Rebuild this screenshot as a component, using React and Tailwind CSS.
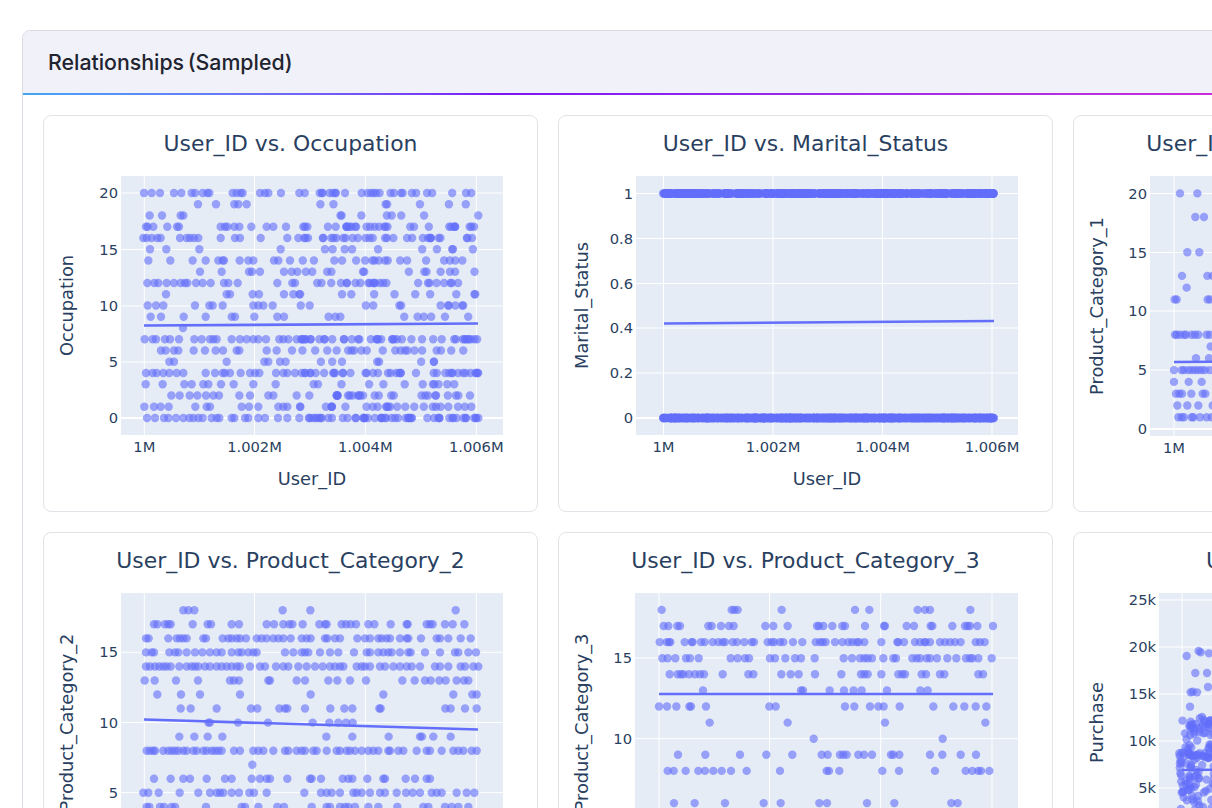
import { useMemo } from 'react';

const DOT = '#636efa';

// small seeded generator so the scatter stays the same on every render
function seeded(seed) {
  let s = seed;
  return () => {
    s = (s * 1664525 + 1013904223) % 4294967296;
    return s / 4294967296;
  };
}

function scatterRows(counts, seed, left, right, yOf) {
  const rand = seeded(seed);
  const dots = [];
  Object.entries(counts).forEach(([value, count]) => {
    for (let i = 0; i < count; i += 1) {
      dots.push([left + rand() * (right - left), yOf(Number(value))]);
    }
  });
  return dots;
}

function listedRows(rows, toX, yOf) {
  const dots = [];
  Object.entries(rows).forEach(([value, xs]) => {
    xs.forEach((x) => dots.push([toX(x), yOf(Number(value))]));
  });
  return dots;
}

const occupationRows = {
  20: [282, 305, 330, 372, 394, 425, 435, 458, 472, 478, 548, 560, 572, 578, 630, 645, 655, 693, 748],
  19: [444, 498, 553, 565, 590],
  18: [299, 336, 392, 400],
  17: [288, 293, 310, 352, 381, 387, 512, 525, 532, 553, 568, 604, 650, 670, 708],
  16: [280, 290, 305, 322, 332, 390, 410, 420, 432, 445, 512, 555, 570, 632, 712, 745],
  15: [300, 349, 448, 692],
  14: [295, 361, 428, 467, 505, 518, 522, 569, 595, 610, 672, 685, 720],
  13: [450, 515, 597, 606, 630, 702, 725, 742],
  12: [292, 313, 325, 350, 372, 392, 405, 412, 438, 458, 482, 522, 535, 563, 682, 727, 735],
  11: [348, 530, 540, 608, 627, 702, 730, 748],
  10: [293, 318, 340, 435, 478, 488, 518, 610, 625, 640, 668],
  9: [302, 333, 401, 467, 545, 555, 613, 682, 702],
  8: [399],
  7: [284, 308, 318, 345, 360, 387, 433, 455, 480, 490, 500, 545, 570, 590, 610, 625, 648, 688, 700, 715, 740],
  6: [333, 347, 372, 385, 431, 465, 497, 519, 560, 568, 650, 680, 726],
  5: [358, 372, 530, 643, 655, 690, 707],
  4: [288, 308, 320, 340, 358, 380, 400, 467, 495, 518, 525, 540, 572, 600, 615, 628, 678, 700, 712, 735],
  3: [287, 338, 403, 425, 460, 475, 513, 551, 610, 677],
  2: [364, 389, 419, 442, 468, 490, 507, 568, 600, 655, 670, 740],
  1: [283, 312, 332, 356, 436, 470, 480, 575, 597, 625, 685, 700, 712, 750],
  0: [291, 315, 342, 355, 378, 400, 418, 430, 445, 458, 485, 500, 508, 545, 553, 585, 595, 625, 645, 684, 712, 748],
};

// right part of the occupation chart, from x = 300 on
const occupationCounts = {
  20: 26, 19: 7, 18: 8, 17: 30, 16: 30, 15: 10, 14: 18, 13: 13, 12: 24, 11: 10, 10: 12,
  9: 9, 7: 40, 6: 20, 5: 8, 4: 38, 3: 12, 2: 26, 1: 24, 0: 50,
};

const category2Rows = {
  18: [430, 445, 463, 728, 811, 1247],
  17: [342, 352, 375, 385, 392, 458, 503, 513, 575, 597, 680, 702, 730, 748, 757, 788, 838, 855, 860, 905, 918, 932, 948, 985, 1003, 1052, 1100, 1103, 1160, 1170, 1178, 1215, 1238, 1273],
  16: [318, 326, 385, 410, 420, 430, 440, 490, 498, 548, 565, 575, 590, 600, 618, 650, 665, 680, 700, 715, 730, 752, 785, 800, 812, 855, 862, 885, 900, 952, 975, 990, 1015, 1025, 1040, 1050, 1080, 1100, 1105, 1143, 1190, 1200, 1225, 1262, 1292],
  15: [318, 335, 342, 388, 405, 415, 440, 465, 487, 510, 530, 545, 575, 595, 605, 625, 640, 650, 735, 760, 785, 795, 805, 840, 870, 895, 942, 980, 990, 1015, 1030, 1045, 1055, 1080, 1105, 1112, 1155, 1200, 1245, 1255, 1285, 1308],
  14: [318, 330, 345, 358, 370, 380, 392, 418, 440, 455, 465, 475, 495, 510, 530, 545, 560, 575, 590, 600, 630, 660, 675, 708, 730, 745, 775, 800, 825, 848, 870, 885, 900, 910, 950, 965, 975, 990, 1020, 1035, 1060, 1080, 1100, 1115, 1140, 1185, 1200, 1225, 1262, 1275, 1300, 1315],
  13: [314, 344, 408, 474, 570, 582, 597, 685, 690, 770, 795, 865, 892, 930, 978, 1087, 1124, 1155, 1172, 1198, 1217, 1250, 1272, 1285],
  12: [352, 423, 480, 600, 812, 1030, 1240, 1297, 1310],
  11: [422, 452, 530, 633, 652, 718, 735, 742, 795, 871, 913, 937, 1018, 1022, 1216, 1232, 1275, 1310],
  10: [505, 510, 594, 684, 818, 868, 895, 918, 938],
  9: [418, 463, 503, 547, 859, 937, 1046, 1140, 1146, 1180, 1232],
  8: [320, 330, 340, 345, 370, 385, 395, 405, 415, 430, 440, 460, 470, 490, 500, 515, 525, 535, 545, 582, 600, 640, 655, 670, 700, 735, 745, 770, 785, 795, 820, 830, 860, 890, 900, 920, 930, 945, 965, 985, 1000, 1015, 1045, 1050, 1075, 1090, 1130, 1160, 1170, 1205, 1240, 1255, 1270, 1295, 1310],
  7: [637],
  6: [342, 392, 430, 450, 500, 555, 575, 635, 660, 680, 690, 742, 810, 815, 843, 908, 925, 937, 982, 1030, 1035, 1097, 1125, 1160, 1170],
  5: [310, 325, 356, 419, 475, 510, 530, 540, 550, 575, 597, 628, 642, 680, 793, 843, 860, 875, 900, 940, 950, 965, 990, 1020, 1035, 1070, 1098, 1118, 1140, 1175, 1190, 1205, 1250, 1280, 1303],
  4: [320, 328, 360, 372, 395, 405, 498, 605, 615, 655, 712, 732, 815, 860, 870, 900, 915, 925, 945, 985, 1015, 1072, 1150, 1165, 1215, 1235, 1255, 1285],
};

const category3Rows = {
  18: [320, 530, 538, 548, 680, 900, 943, 1088, 1110, 1125, 1246],
  17: [326, 340, 367, 375, 460, 470, 498, 522, 536, 631, 655, 698, 786, 792, 805, 832, 862, 870, 930, 987, 990, 1055, 1077, 1127, 1132, 1192, 1230, 1238, 1245, 1267, 1314],
  16: [314, 335, 342, 346, 389, 410, 413, 438, 449, 473, 490, 503, 510, 533, 546, 568, 590, 597, 638, 650, 658, 675, 685, 714, 742, 782, 795, 803, 812, 840, 862, 880, 892, 905, 912, 928, 979, 1027, 1030, 1047, 1080, 1095, 1108, 1112, 1125, 1155, 1170, 1185, 1200, 1217, 1262, 1275, 1289],
  15: [322, 338, 361, 393, 405, 431, 527, 548, 570, 582, 645, 660, 691, 720, 738, 779, 866, 891, 915, 928, 938, 951, 985, 1015, 1023, 1072, 1085, 1095, 1115, 1125, 1146, 1177, 1204, 1233, 1245, 1252, 1270, 1310],
  14: [344, 368, 378, 385, 402, 420, 435, 447, 503, 580, 595, 679, 707, 731, 780, 859, 918, 928, 938, 979, 1030, 1042, 1050, 1100, 1113, 1155, 1168, 1270, 1284],
  13: [444, 738, 744, 824, 867, 896, 920, 996, 1096, 1118],
  12: [312, 336, 364, 403, 408, 453, 643, 662, 870, 898, 945, 970, 986, 1034, 1135, 1195, 1228, 1262, 1294],
  11: [464, 698, 990, 1291],
  10: [776, 1163],
  9: [369, 451, 555, 634, 712, 800, 818, 855, 865, 875, 910, 927, 951, 1008, 1015, 1033, 1125, 1162, 1217, 1263],
  8: [338, 356, 392, 430, 450, 475, 500, 528, 575, 675, 815, 822, 853, 982, 1032, 1140, 1232, 1252, 1270, 1278, 1303],
  6: [357, 419, 510, 626, 677, 793, 816, 936, 1018, 1189, 1208],
};

const category1Rows = {
  20: [360, 412],
  18: [406, 432],
  15: [382, 418],
  13: [366, 442, 458],
  12: [380],
  11: [344, 350, 443, 450],
  8: [345, 350, 360, 372, 378, 395, 405, 415, 440, 450],
  7: [452],
  6: [408, 447],
  5: [342, 365, 372, 385, 395, 405, 415, 425, 435, 450],
  4: [342, 386, 425],
  3: [348, 358, 366, 394, 428, 436],
  2: [352, 382, 415, 458],
  1: [355, 365, 372, 395, 400, 420, 440, 455],
};

const purchaseTop = [
  [380, 408], [416, 393], [422, 397], [447, 400], [406, 459], [441, 459], [444, 501], [392, 517],
  [398, 515], [411, 517], [390, 560], [432, 600], [392, 605], [388, 617], [398, 612], [395, 625],
  [424, 620], [445, 612], [375, 640], [418, 636], [452, 645],
];

function purchaseDots() {
  const rand = seeded(41);
  const dots = purchaseTop.map(([x, y]) => [1060 + x / 3, 520 + y / 3]);
  for (let i = 0; i < 22; i += 1) {
    dots.push([1182 + rand() * 32, 735 + rand() * 18 - 18]);
  }
  for (let i = 0; i < 80; i += 1) {
    dots.push([1179 + rand() * 36, 738 + rand() * 72]);
  }
  for (let i = 0; i < 16; i += 1) {
    dots.push([1182 + rand() * 32, 752 + rand() * 6]);
  }
  return dots;
}

const yLinear = (zero, perUnit) => (value) => zero - value * perUnit;

function occupationDots() {
  const yOf = yLinear(418, 11.25);
  return [
    ...listedRows(occupationRows, (x) => 50 + x / 3, yOf),
    ...scatterRows(occupationCounts, 7, 300, 479, yOf),
  ];
}

const charts = [
  {
    title: 'User_ID vs. Occupation',
    yLabel: 'Occupation',
    card: [43, 115],
    plot: [121, 176, 503, 435],
    xTicks: [144.3, 254.5, 365.3, 476.3],
    yTicks: [['0', 418], ['5', 362], ['10', 306], ['15', 249.5], ['20', 193]],
    zero: 418,
    line: [144, 325.5, 478, 323.5],
    dots: occupationDots,
  },
  {
    title: 'User_ID vs. Marital_Status',
    yLabel: 'Marital_Status',
    card: [558, 115],
    plot: [636, 176, 1018, 435],
    xTicks: [663.5, 773, 882.5, 992],
    yTicks: [['0', 418], ['0.2', 373], ['0.4', 328], ['0.6', 283.5], ['0.8', 238.5], ['1', 193.5]],
    zero: 418,
    line: [664, 323.5, 994, 321],
    dots: () => scatterRows({ 1: 650, 0: 900 }, 11, 663, 994, yLinear(418, 224.5)),
  },
  {
    title: 'User_ID vs. Product_Category_1',
    yLabel: 'Product_Category_1',
    card: [1073, 115],
    plot: [1150, 176, 1532, 436],
    xTicks: [1174, 1284, 1395, 1506],
    yTicks: [['0', 429], ['5', 370], ['10', 311], ['15', 252.5], ['20', 193.5]],
    zero: 429,
    line: [1174, 362, 1508, 360],
    dots: () => listedRows(category1Rows, (x) => 1060 + x / 3, yLinear(429, 11.78)),
  },
  {
    title: 'User_ID vs. Product_Category_2',
    yLabel: 'Product_Category_2',
    card: [43, 532],
    plot: [121, 593, 503, 852],
    xTicks: [144.3, 254.5, 365.3, 476.3],
    yTicks: [['5', 792.7], ['10', 722.5], ['15', 652.3]],
    line: [144, 719.5, 478, 729.5],
    dots: () => listedRows(category2Rows, (x) => 40 + x / 3, yLinear(863, 14.04)),
  },
  {
    title: 'User_ID vs. Product_Category_3',
    yLabel: 'Product_Category_3',
    card: [558, 532],
    plot: [635, 593, 1018, 852],
    xTicks: [659, 769.5, 880.7, 992],
    yTicks: [['10', 738.7], ['15', 658]],
    line: [659, 694, 993, 694],
    dots: () => listedRows(category3Rows, (x) => 555 + x / 3, yLinear(899.7, 16.1)),
  },
  {
    title: 'User_ID vs. Purchase',
    yLabel: 'Purchase',
    card: [1073, 532],
    plot: [1159, 593, 1541, 852],
    xTicks: [1182, 1292, 1403, 1514],
    yTicks: [['5k', 788], ['10k', 741], ['15k', 694], ['20k', 647], ['25k', 600]],
    line: [1182, 770, 1516, 768],
    dots: purchaseDots,
  },
];

const xTickLabels = ['1M', '1.002M', '1.004M', '1.006M'];

function ScatterChart({ chart }) {
  const { card, plot, xTicks, yTicks, line, zero } = chart;
  const [left, top, right, bottom] = plot;
  const dots = useMemo(() => chart.dots(), [chart]);
  const yLabelX = card[0] + 30;
  const yLabelY = (top + bottom) / 2;

  return (
    <svg
      className="block"
      width="493"
      height="395"
      viewBox={`${card[0] + 1} ${card[1] + 1} 493 395`}
      fill="#2a3f5f"
      style={{ fontFamily: '"DejaVu Sans", Verdana, sans-serif' }}
    >
      <text x={card[0] + 247.5} y={card[1] + 36} textAnchor="middle" fontSize="21.9">
        {chart.title}
      </text>
      <rect x={left} y={top} width={right - left} height={bottom - top} fill="#e5ecf6" />
      {xTicks.map((x) => (
        <line key={x} x1={x} x2={x} y1={top} y2={bottom} stroke="#fff" strokeWidth="1" />
      ))}
      {yTicks.map(([label, y]) => (
        <line key={label} x1={left} x2={right} y1={y} y2={y} stroke="#fff" strokeWidth={y === zero ? 2 : 1} />
      ))}
      {dots.map(([x, y], i) => (
        <circle key={i} cx={x} cy={y} r="4.2" fill={DOT} opacity="0.6" />
      ))}
      <line x1={line[0]} y1={line[1]} x2={line[2]} y2={line[3]} stroke={DOT} strokeWidth="2.6" />
      {yTicks.map(([label, y]) => (
        <text key={label} x={left - 3} y={y + 5} textAnchor="end" fontSize="14.7">
          {label}
        </text>
      ))}
      {xTicks.map((x, i) => (
        <text key={x} x={x} y={bottom + 17} textAnchor="middle" fontSize="14.7">
          {xTickLabels[i]}
        </text>
      ))}
      <text x={(left + right) / 2} y={bottom + 50} textAnchor="middle" fontSize="17.8">
        User_ID
      </text>
      <text
        x={yLabelX}
        y={yLabelY}
        textAnchor="middle"
        fontSize="17.8"
        transform={`rotate(-90 ${yLabelX} ${yLabelY})`}
      >
        {chart.yLabel}
      </text>
    </svg>
  );
}

export default function App() {
  return (
    <div className="h-screen overflow-hidden bg-white pl-[22px] pt-[30px]">
      <section className="w-[1567px] overflow-hidden rounded-lg border border-[#d9dbe3] bg-white">
        <div className="flex h-[62px] items-center bg-[#f0f1f9] px-[25px] pt-0.5">
          <h2 className="text-[21.3px] font-medium [word-spacing:-2px] text-[#1f2430] [font-family:Inter,sans-serif]">
            Relationships (Sampled)
          </h2>
        </div>
        <div className="h-[2px] bg-linear-to-r from-[#42a5f5] via-[#7a14f5] via-30% to-[#f01cc8]" />
        <div className="grid grid-cols-[repeat(3,495px)] gap-5 p-5">
          {charts.map((chart) => (
            <div key={chart.title} className="h-[397px] rounded-lg border border-[#e2e3e8] bg-white">
              <ScatterChart chart={chart} />
            </div>
          ))}
        </div>
      </section>
    </div>
  );
}
